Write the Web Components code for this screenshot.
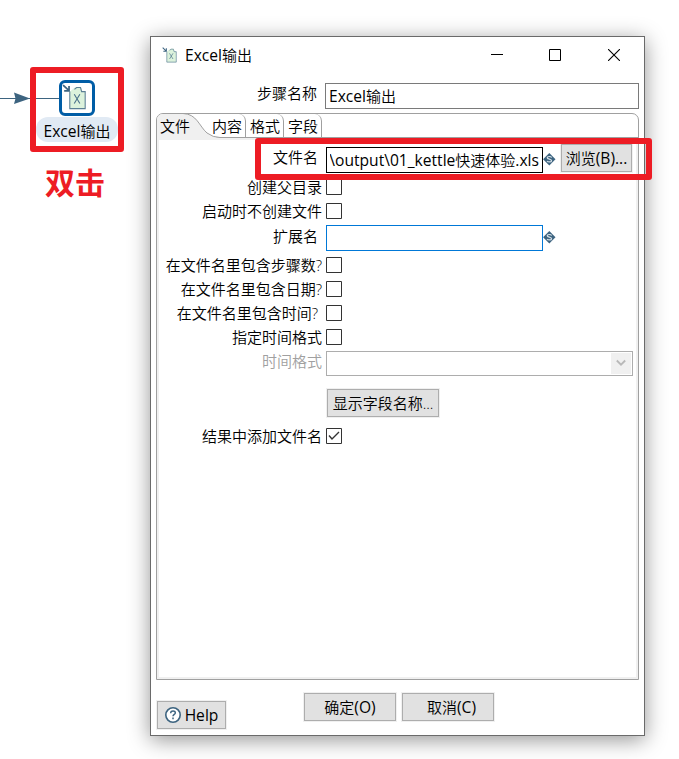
<!DOCTYPE html>
<html lang="zh-CN">
<head>
<meta charset="UTF-8">
<title>Excel输出</title>
<style>
  body {
    margin: 0;
    width: 679px;
    height: 759px;
    position: relative;
    overflow: hidden;
    background: #fff;
    color: #000;
    font: 350 15px/20px "Open Sans", "Noto Sans CJK SC", sans-serif;
    white-space: nowrap;
  }
  /* Latin runs are set slightly larger than the Chinese text */
  .en { font-size: 15.6px; font-weight: 400; line-height: 1; }

  /* items on the free canvas */
  step-hop { position: absolute; left: 0; top: 92px; }
  step-node { position: absolute; left: 36px; top: 80px; }
  win-dialog { position: absolute; left: 150px; top: 36px; }
  mark-box { position: absolute; }
  mark-text { position: absolute; left: 45px; top: 163px; }
</style>
</head>
<body>
<step-hop></step-hop>
<step-node><span class="en">Excel</span>输出</step-node>

<win-dialog>
  <span slot="title"><span class="en">Excel</span>输出</span>
  <span slot="name-label">步骤名称</span>
  <text-field slot="name" style="--w: 314px; --line: #7a7a7a"><span class="en">Excel</span>输出</text-field>

  <tab-folder slot="body">
    <tab-item slot="tabs" selected>文件</tab-item>
    <tab-item slot="tabs">内容</tab-item>
    <tab-item slot="tabs">格式</tab-item>
    <tab-item slot="tabs">字段</tab-item>

    <form-row label="文件名" style="--h: 31px; --align: flex-start; --label-top: 3px; --label-end: 8px">
      <text-field clipped style="--w: 217px; --line: #000; margin-top: 3px"><span class="en">\output\01_kettle</span>快速体验<span class="en">.xls</span></text-field>
      <var-mark style="margin-top: 9px"></var-mark>
      <win-button style="--w: 71px; margin-left: 5px">浏览<span class="en">(B)...</span></win-button>
    </form-row>
    <form-row label="创建父目录"><check-box></check-box></form-row>
    <form-row label="启动时不创建文件"><check-box></check-box></form-row>
    <form-row label="扩展名" style="--h: 30px; --label-end: 8px; --label-shift: -5px">
      <text-field style="--w: 217px; --line: #0078d7"></text-field>
      <var-mark></var-mark>
    </form-row>
    <form-row label="在文件名里包含步骤数?"><check-box></check-box></form-row>
    <form-row label="在文件名里包含日期?"><check-box></check-box></form-row>
    <form-row label="在文件名里包含时间?" style="--label-end: 8px"><check-box></check-box></form-row>
    <form-row label="指定时间格式"><check-box></check-box></form-row>
    <form-row label="时间格式" style="--h: 29px; --label-color: #a0a0a0; --label-shift: -6px"><combo-box></combo-box></form-row>
    <form-row label="" style="--h: 50px"><win-button style="--w: 112px; margin-left: 1px">显示字段名称...</win-button></form-row>
    <form-row label="结果中添加文件名" style="--h: 16px"><check-box checked></check-box></form-row>
  </tab-folder>

  <win-button slot="help" help style="--w: 69px"><span class="en">Help</span></win-button>
  <win-button slot="actions" style="--w: 92px">确定<span class="en">(O)</span></win-button>
  <win-button slot="actions" style="--w: 92px; --indent: 7px">取消<span class="en">(C)</span></win-button>
</win-dialog>

<mark-box style="left: 30px; top: 67px; width: 94px; height: 85px"></mark-box>
<mark-box style="left: 255px; top: 138px; width: 397px; height: 42px"></mark-box>
<mark-text>双击</mark-text>

<script>
// Attaches an open shadow root with the given styles and markup
function render(el, css, html) {
  el.attachShadow({ mode: 'open' }).innerHTML = `<style>:host { box-sizing: border-box; } * { box-sizing: border-box; }${css}</style>${html}`;
}

// Sheet with an arrow, used by the canvas node and the title bar
const sheetIcon = (size) => `
  <svg width="${size}" height="${size}" viewBox="0 0 24 24" fill="none">
    <path d="M7.200 22.700V7.200l4.300-3.700 2-.7h4l1.300 3.800h2.500v16.100z" fill="#dcf2dc"/>
    <path d="M7.200 7v15.700h14.200V7h-3.300l-1-3.700h-3.600l-2 1.700" stroke="#5b7f95" stroke-width="1"/>
    <path d="M11.300 9.500l5.200 8.500M16.500 9.500l-5.200 8.500" stroke="#49708a" stroke-width="1"/>
    <path d="M1 1l5 4.700M6.500 1.800v4.500H2" stroke="#3d6480" stroke-width="1.600"/>
  </svg>`;

class StepHop extends HTMLElement {
  constructor() {
    super();
    render(this, `:host { display: block; } svg { display: block; }`, `
      <svg width="60" height="13" viewBox="0 0 60 13">
        <path d="M0 6.500h60" stroke="#3d6480"/>
        <path d="M14 .5L30 6.500L14 12l1.500-5.500z" fill="#3d6480"/>
      </svg>`);
  }
}

class StepNode extends HTMLElement {
  constructor() {
    super();
    render(this, `
      :host { display: flex; flex-direction: column; align-items: center; width: 82px; }
      .icon { width: 36px; height: 36px; padding: 1px 0 0; border: 3px solid #005da6; border-radius: 6px; background: #fff; }
      .icon svg { display: block; }
      .label { width: 100%; height: 25px; margin-top: 1px; border-radius: 12px; background: #e1eaf4; text-align: center; line-height: 28px; }
    `, `<div class="icon">${sheetIcon(26)}</div><div class="label"><slot></slot></div>`);
  }
}

class WinDialog extends HTMLElement {
  constructor() {
    super();
    render(this, `
      :host { display: flex; flex-direction: column; width: 495px; height: 700px; border: 1px solid #6a6a6a; background: #fff; box-shadow: 0 4px 20px rgba(0, 0, 0, .42); }
      header { display: flex; align-items: center; height: 37px; padding: 0 24px 0 11px; }
      header > svg { display: block; margin-top: -2px; }
      .title { flex: 1; padding-left: 7px; margin-top: -2px; }
      .controls { display: flex; gap: 47px; margin-top: -1px; }
      .controls svg { display: block; }
      .controls svg:first-child { margin-left: -1px; margin-right: -1px; }
      .name { display: flex; height: 26px; margin-top: 9px; padding-right: 5px; justify-content: flex-end; }
      .name > span { padding-right: 8px; line-height: 21px; }
      .body { display: block; margin: 4px 5px 0; }
      footer { display: grid; grid-template-columns: 147px auto; padding: 13px 0 0 6px; }
      .help { padding-top: 8px; display: flex; }
      .actions { display: flex; gap: 6px; }
    `, `
      <header>
        ${sheetIcon(16)}
        <span class="title"><slot name="title"></slot></span>
        <div class="controls">
          <svg width="14" height="12" stroke="#000"><path d="M2 5.500h12"/></svg>
          <svg width="12" height="12" stroke="#000" fill="none"><path d="M.5.5h11v11H.5z"/></svg>
          <svg width="12" height="12" stroke="#000" stroke-width="1.100"><path d="M0 0l12 12M12 0L0 12"/></svg>
        </div>
      </header>
      <div class="name"><span><slot name="name-label"></slot></span><slot name="name"></slot></div>
      <div class="body"><slot name="body"></slot></div>
      <footer>
        <div class="help"><slot name="help"></slot></div>
        <div class="actions"><slot name="actions"></slot></div>
      </footer>`);
  }
}

class TabFolder extends HTMLElement {
  constructor() {
    super();
    render(this, `
      :host { display: block; height: 567px; border: 1px solid #a0a0a0; border-radius: 7px 7px 0 0; overflow: hidden; }
      .tabs { display: flex; height: 24px; border-bottom: 1px solid #a0a0a0; }
      .page { height: 541px; border: 2px solid #f0f0f0; padding-top: 4px; }
    `, `<div class="tabs"><slot name="tabs"></slot></div><div class="page"><slot></slot></div>`);
  }
}

class TabItem extends HTMLElement {
  constructor() {
    super();
    const selected = this.hasAttribute('selected');
    render(this, selected ? `
      :host { display: grid; width: 51px; height: 24px; }
      svg, span { grid-area: 1 / 1; }
      svg { display: block; overflow: visible; }
      span { padding-left: 3px; line-height: 25px; z-index: 1; }
    ` : `
      :host { display: block; width: 38px; height: 23px; padding-left: 4px; line-height: 25px; border-right: 1px solid #a0a0a0; border-top-right-radius: 7px; }
    `, selected ? `
      <svg width="64" height="24" viewBox="0 0 64 24">
        <path d="M0 0h28C40 0 42 12 50 19Q56 23.500 63 23.500V24H0z" fill="#f0f0f0"/>
        <path d="M26-.5C40 0 42 12 50 19Q56 23.500 63 23.500" fill="none" stroke="#a0a0a0"/>
      </svg><span><slot></slot></span>` : `<slot></slot>`);
  }
}

class FormRow extends HTMLElement {
  constructor() {
    super();
    render(this, `
      :host { display: flex; height: var(--h, 24px); align-items: var(--align, center); }
      .label { width: 167px; padding-right: var(--label-end, 4px); margin-top: var(--label-top, var(--label-shift, 0)); text-align: right; color: var(--label-color, #000); }
    `, `<span class="label">${this.getAttribute('label')}</span><slot></slot>`);
  }
}

class TextField extends HTMLElement {
  constructor() {
    super();
    render(this, `
      :host { display: flex; width: var(--w); height: 26px; border: 1px solid var(--line); padding: 0 3px; background: #fff; line-height: 25px; }
      .value { display: flex; flex: 1; overflow: hidden; }
      :host([clipped]) .value { justify-content: flex-end; }
    `, `<div class="value"><div><slot></slot></div></div>`);
  }
}

class VarMark extends HTMLElement {
  constructor() {
    super();
    render(this, `:host { display: block; width: 13px; height: 13px; margin-top: -2px; } svg { display: block; }`, `
      <svg width="13" height="13" viewBox="0 0 13 13">
        <path d="M6.300 0l6.200 6.300-6.200 6.200L.1 6.300z" fill="#3d6480"/>
        <path d="M8.600 4.600C8 3.100 4.200 3.100 4.200 4.800c0 1.700 4.400 1 4.400 2.900 0 1.700-3.900 1.600-4.500.2" fill="none" stroke="#d5dfe6" stroke-width="1.200"/>
      </svg>`);
  }
}

class WinButton extends HTMLElement {
  constructor() {
    super();
    const help = this.hasAttribute('help') ? `
      <svg width="16" height="16" viewBox="0 0 16 16" fill="none" stroke="#3d6480">
        <circle cx="8" cy="8" r="7.200" fill="#fff" stroke-width="1.600"/>
        <path d="M5.700 6.200C5.700 3 10.500 3.300 10.300 6c-.1 1.500-2.300 1.500-2.300 3.300M8 10.500v1.700" stroke-width="1.500"/>
      </svg>` : '';
    render(this, `
      :host { display: flex; align-items: center; justify-content: center; gap: 4px; width: var(--w); height: 28px; padding-left: var(--indent, 0); border: 1px solid #adadad; background: #e1e1e1; box-shadow: 0 0 0 1px #f0f0f0; line-height: 26px; }
      svg { display: block; }
    `, `${help}<span><slot></slot></span>`);
  }
}

class CheckBox extends HTMLElement {
  constructor() {
    super();
    const tick = this.hasAttribute('checked') ? '<path d="M3 7.500l3 3.500L13 4" stroke-width="1.400"/>' : '';
    render(this, `:host { display: block; } svg { display: block; }`, `
      <svg width="16" height="16" fill="none" stroke="#333"><path d="M.5.5h15v15H.5z" fill="#fff"/>${tick}</svg>`);
  }
}

class ComboBox extends HTMLElement {
  constructor() {
    super();
    render(this, `
      :host { display: flex; justify-content: flex-end; width: 307px; height: 25px; margin-top: -1px; border: 1px solid #adadad; padding: 1px; }
      .arrow { display: grid; place-items: center; width: 20px; background: #f0f0f0; }
    `, `<div class="arrow"><svg width="10" height="8" fill="none" stroke="#b8b8b8" stroke-width="1.800"><path d="M.8 1.500L5 5.700l4.200-4.200"/></svg></div>`);
  }
}

class MarkBox extends HTMLElement {
  constructor() {
    super();
    render(this, `:host { display: block; border: 6px solid #ed1c24; border-radius: 3px; }`, '');
  }
}

class MarkText extends HTMLElement {
  constructor() {
    super();
    render(this, `:host { display: block; color: #ed1c24; font-size: 30px; font-weight: 700; line-height: 40px; }`, '<slot></slot>');
  }
}

customElements.define('step-hop', StepHop);
customElements.define('step-node', StepNode);
customElements.define('win-dialog', WinDialog);
customElements.define('tab-folder', TabFolder);
customElements.define('tab-item', TabItem);
customElements.define('form-row', FormRow);
customElements.define('text-field', TextField);
customElements.define('var-mark', VarMark);
customElements.define('win-button', WinButton);
customElements.define('check-box', CheckBox);
customElements.define('combo-box', ComboBox);
customElements.define('mark-box', MarkBox);
customElements.define('mark-text', MarkText);
</script>
</body>
</html>
